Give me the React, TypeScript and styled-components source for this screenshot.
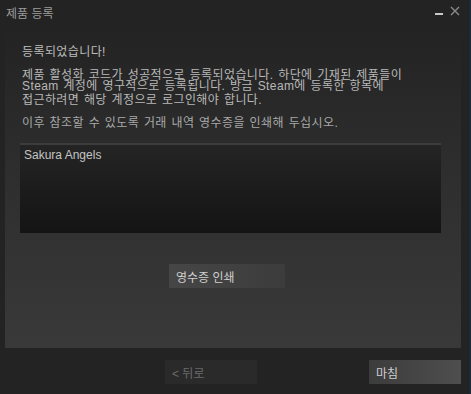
import React from "react";
import styled, { createGlobalStyle } from "styled-components";

const Global = createGlobalStyle`
  html, body {
    margin: 0;
    padding: 0;
    background: #232323;
  }
  body {
    font-family: "Liberation Sans", "Noto Sans CJK KR", sans-serif;
  }
`;

const Window = styled.div`
  width: 471px;
  height: 394px;
  background: #232323;
  display: flex;
  flex-direction: column;
  box-sizing: border-box;
  border-right: 2px solid #1a2a3a;
  overflow: hidden;
`;

const TitleBar = styled.div`
  height: 28px;
  display: flex;
  align-items: flex-start;
  justify-content: space-between;
  padding: 7px 0 0 6px;
  box-sizing: border-box;
`;

const Title = styled.div`
  font-size: 12px;
  line-height: 14px;
  color: #9c9c9c;
`;

const Controls = styled.div`
  display: flex;
  align-items: flex-start;
  gap: 6px;
  margin-right: 9px;
  margin-top: -2px;
`;

const Panel = styled.div`
  height: 320px;
  margin: 0 8px 0 5px;
  background: linear-gradient(to bottom, #232323 0%, #2e2e2e 45%, #393939 100%);
  padding: 17px 20px 0 15px;
  box-sizing: border-box;
  display: flex;
  flex-direction: column;
`;

const Heading = styled.div`
  font-size: 12px;
  line-height: 14px;
  color: #bdbdbd;
  padding-left: 2px;
  margin-bottom: 9px;
  letter-spacing: 0.4px;
`;

const Line = styled.div<{ $h: number }>`
  font-size: 12px;
  line-height: 14px;
  height: ${(p) => p.$h}px;
  color: #b8b8b8;
  padding-left: 2px;
  white-space: nowrap;
  letter-spacing: 0.4px;
  word-spacing: 1px;
`;

const Note = styled.div`
  font-size: 12px;
  line-height: 14px;
  color: #a8a8a8;
  padding-left: 2px;
  margin-top: 9px;
  white-space: nowrap;
  letter-spacing: 0.4px;
  word-spacing: 1px;
`;

const ListBox = styled.div`
  margin-top: 13px;
  height: 90px;
  border-top: 2px solid #3c3c3c;
  background: linear-gradient(to bottom, #242424, #141414);
  box-sizing: border-box;
  padding: 3px 4px;
  font-size: 12px;
  line-height: 14px;
  color: #c4c4c4;
`;

const Button = styled.button<{ $disabled?: boolean }>`
  width: 92px;
  height: 24px;
  border: none;
  padding: 0 0 0 7px;
  text-align: left;
  font-family: "Liberation Sans", "Noto Sans CJK KR", sans-serif;
  font-size: 12px;
  color: ${(p) => (p.$disabled ? "#6a6a6a" : "#cfcfcf")};
  background: ${(p) =>
    p.$disabled ? "#2a2a2a" : "linear-gradient(to right, #3c3c3c, #4e4e4e)"};
  cursor: pointer;
`;

const PrintButton = styled(Button)`
  width: 116px;
  margin: 31px 0 0 149px;
  background: linear-gradient(to right, #464646, #3c3c3c);
`;

const Footer = styled.div`
  display: flex;
  justify-content: flex-end;
  gap: 112px;
  padding: 12px 8px 0 0;
`;

export default function App() {
  return (
    <>
      <Global />
      <Window>
        <TitleBar>
          <Title>제품 등록</Title>
          <Controls>
            <svg width="9" height="12" viewBox="0 0 9 12">
              <rect x="0" y="8" width="8" height="2" fill="#c8c8c8" />
            </svg>
            <svg width="10" height="12" viewBox="0 0 10 12">
              <path d="M1 2 L9 10 M9 2 L1 10" stroke="#8a8a8a" strokeWidth="1.4" />
            </svg>
          </Controls>
        </TitleBar>
        <Panel>
          <Heading>등록되었습니다!</Heading>
          <Line $h={11}>제품 활성화 코드가 성공적으로 등록되었습니다. 하단에 기재된 제품들이</Line>
          <Line $h={14}>Steam 계정에 영구적으로 등록됩니다. 방금 Steam에 등록한 항목에</Line>
          <Line $h={14}>접근하려면 해당 계정으로 로그인해야 합니다.</Line>
          <Note>이후 참조할 수 있도록 거래 내역 영수증을 인쇄해 두십시오.</Note>
          <ListBox>Sakura Angels</ListBox>
          <PrintButton>영수증 인쇄</PrintButton>
        </Panel>
        <Footer>
          <Button $disabled>&lt; 뒤로</Button>
          <Button>마침</Button>
        </Footer>
      </Window>
    </>
  );
}
